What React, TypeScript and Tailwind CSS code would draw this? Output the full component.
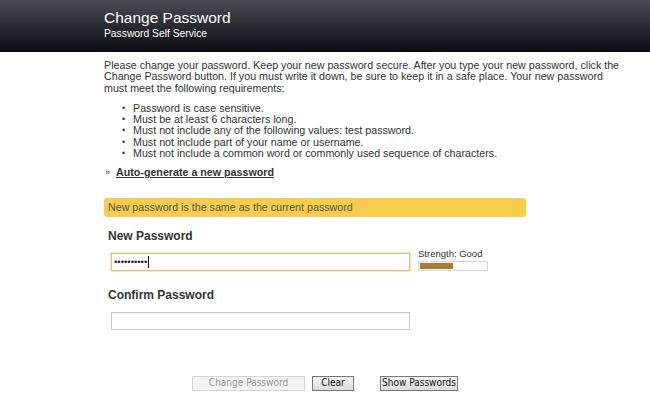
import React from 'react';

const requirements = [
  'Password is case sensitive.',
  'Must be at least 6 characters long.',
  'Must not include any of the following values: test password.',
  'Must not include part of your name or username.',
  'Must not include a common word or commonly used sequence of characters.',
];

const App: React.FC = () => {
  return (
    <div className="w-[650px] h-[399px] bg-white overflow-hidden font-['Liberation_Sans',Arial,sans-serif]">
      {/* Header */}
      <div className="h-[52px] bg-gradient-to-b from-[#4d4d55] to-[#0b0b12] pl-[104px] pt-[8px]">
        <h1 className="text-[15.5px] leading-[19px] text-white">
          Change Password
        </h1>
        <p className="text-[10.3px] leading-[14px] text-white">
          Password Self Service
        </p>
      </div>

      <div className="pl-[104px] pt-[8px] w-[640px] text-[10.7px] leading-[11.3px] text-[#333]">
        <p className="whitespace-nowrap">
          <span className="block">Please change your password. Keep your new password secure. After you type your new password, click the</span>
          <span className="block">Change Password button. If you must write it down, be sure to keep it in a safe place. Your new password</span>
          <span className="block">must meet the following requirements:</span>
        </p>

        <ul className="mt-[9px] pl-[18px]">
          {requirements.map((r) => (
            <li key={r} className="flex items-center">
              <span className="w-[11px] text-[9px]">•</span>
              <span>{r}</span>
            </li>
          ))}
        </ul>

        <div className="mt-[8px] flex items-center pl-[1px]">
          <span className="w-[11px] text-[9px]">»</span>
          <a href="#" className="font-bold underline text-[#333]">Auto-generate a new password</a>
        </div>

        <div className="mt-[19px] w-[422px] h-[19px] bg-[#f8cd4b] rounded-[3px] pl-[4px] flex items-center text-[#555]">
          New password is the same as the current password
        </div>

        <div className="pl-[4px] mt-[12px] text-[12px] font-bold text-[#333] leading-[14px]">New Password</div>

        <div className="flex mt-[10px] pl-[7px]">
          <div className="w-[299px] h-[18px] border border-[#dfc27c] outline outline-1 outline-[#f4e6c0] flex items-center pl-[2px]">
            <span className="text-[#222] text-[9.5px] leading-none">••••••••••</span>
            <span className="w-[1px] h-[12px] bg-black ml-[1px]"></span>
          </div>
          <div className="ml-[8px] -mt-[5px]">
            <div className="text-[9.5px] leading-[12px] text-[#333]">Strength: Good</div>
            <div className="mt-[1px] w-[70px] h-[10px] border border-[#d6d6d6] p-[1px]">
              <div className="h-full w-[33px] bg-[#a87a36]"></div>
            </div>
          </div>
        </div>

        <div className="pl-[4px] mt-[17px] text-[12px] font-bold text-[#333] leading-[14px]">Confirm Password</div>

        <div className="mt-[10px] pl-[7px]">
          <div className="w-[299px] h-[18px] border border-[#c8c8c8]"></div>
        </div>
      </div>

      <div className="flex pl-[192px] mt-[46px] text-[10px] whitespace-nowrap font-['DejaVu_Sans_Condensed','DejaVu_Sans',sans-serif]">
        <button className="w-[113px] h-[15px] border border-[#d4d4d4] bg-[#f4f4f4] text-[#999] leading-none">
          Change Password
        </button>
        <button className="ml-[7px] w-[42px] h-[15px] border border-[#777] bg-gradient-to-b from-[#f6f6f6] to-[#dcdcdc] text-[#111] leading-none">
          Clear
        </button>
        <button className="ml-[26px] w-[78px] h-[15px] border border-[#777] bg-gradient-to-b from-[#f6f6f6] to-[#dcdcdc] text-[#111] leading-none">
          Show Passwords
        </button>
      </div>
    </div>
  );
};

export default App;
